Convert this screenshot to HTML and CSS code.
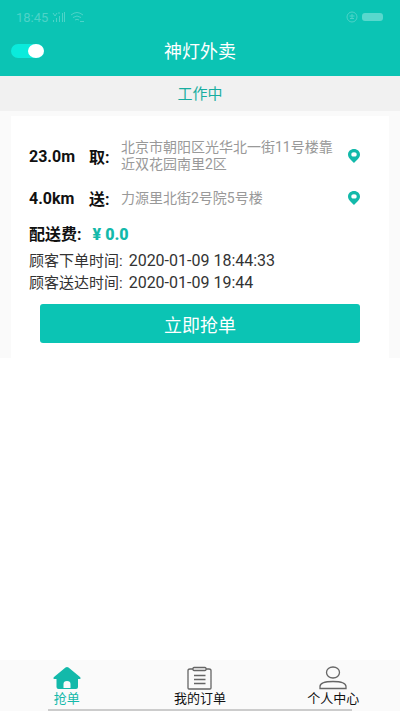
FILE: index.html
```html
<!DOCTYPE html>
<html lang="zh-CN">
<head>
<meta charset="utf-8">
<meta name="viewport" content="width=device-width, initial-scale=1">
<title>神灯外卖</title>
<link rel="stylesheet" href="styles.css">
</head>
<body>
<header class="header">
  <div class="system">
    <span>18:45</span>
    <svg width="14" height="12" viewBox="0 0 14 12" fill="none" stroke="currentColor"><path d="M1.500 11V9M4.500 11V7M7.500 11V5M10.500 11V2M12.500 11V1M1 2l2 3 2-3M6 2h2"/></svg>
    <svg width="15" height="12" viewBox="0 0 15 12" fill="none" stroke="currentColor"><path d="M1 4q6-5 12 0M3 6.500q4-3 8 0M5 9q2-1.500 4 0M10 10.500h4"/></svg>
    <svg class="system-end" width="12" height="12" viewBox="0 0 12 12" fill="none" stroke="currentColor"><circle cx="6" cy="6" r="5"/><path d="M3.500 5h5M4 7.500h4M6 3v5"/></svg>
    <span class="battery"></span>
  </div>
  <div class="titlebar">
    <input class="switch" type="checkbox" role="switch" aria-label="工作中" checked>
    <h1>神灯外卖</h1>
  </div>
</header>
<p class="state">工作中</p>
<main class="orders">
  <article class="card">
    <div class="stop">
      <span class="distance">23.0m</span>
      <span class="kind">取:</span>
      <span class="address">北京市朝阳区光华北一街11号楼靠近双花园南里2区</span>
      <svg class="pin" viewBox="0 0 12 14"><path fill="currentColor" fill-rule="evenodd" d="M6 0C2.600 0 0 2.400 0 5.600 0 9 3.500 11.500 6 14c2.500-2.500 6-5 6-8.400C12 2.400 9.400 0 6 0ZM6 3.200a2.700 2.200 0 1 1 0 4.400 2.700 2.200 0 0 1 0-4.400Z"/></svg>
    </div>
    <div class="stop">
      <span class="distance">4.0km</span>
      <span class="kind">送:</span>
      <span class="address">力源里北街2号院5号楼</span>
      <svg class="pin" viewBox="0 0 12 14"><path fill="currentColor" fill-rule="evenodd" d="M6 0C2.600 0 0 2.400 0 5.600 0 9 3.500 11.500 6 14c2.500-2.500 6-5 6-8.400C12 2.400 9.400 0 6 0ZM6 3.200a2.700 2.200 0 1 1 0 4.400 2.700 2.200 0 0 1 0-4.400Z"/></svg>
    </div>
    <p class="fee"><span>配送费:</span><strong>¥ 0.0</strong></p>
    <p class="time"><span>顾客下单时间:</span><time>2020-01-09 18:44:33</time></p>
    <p class="time"><span>顾客送达时间:</span><time>2020-01-09 19:44</time></p>
    <button class="grab" type="button">立即抢单</button>
  </article>
</main>
<nav class="tabs">
  <a class="tab active" href="#grab">
    <svg width="28" height="24" viewBox="0 0 28 24"><path fill="currentColor" fill-rule="evenodd" d="M12.500 1.500q1.500-1 3 0l11.500 9.500q1.500 2-.5 2H25v8q0 2-2 2H5.500q-2 0-2-2v-8h-2q-2 0-.5-2ZM10.500 22h7v-4q0-3-3.500-3t-3.500 3Z"/></svg>
    <span>抢单</span>
  </a>
  <a class="tab" href="#orders">
    <svg width="28" height="24" viewBox="0 0 28 24" fill="none" stroke="#666" stroke-width="1.300"><path d="M7 3H4q-2 0-2 1.500V22q0 1 1 1h21q1 0 1-1V4.500Q25 3 23 3h-3M8 9.500h11.500M8 13.500h11.500M8 17.500h11.500"/><rect x="7" y="1.500" width="13" height="3" rx="1"/></svg>
    <span>我的订单</span>
  </a>
  <a class="tab" href="#me">
    <svg width="28" height="24" viewBox="0 0 28 24" fill="none" stroke="#666" stroke-width="1.300"><ellipse cx="14" cy="6.500" rx="6.500" ry="5.500"/><path d="M1 22.500v-2q0-5 13-5t13 5v2Z"/></svg>
    <span>个人中心</span>
  </a>
  <span class="gesture"></span>
</nav>
</body>
</html>
```
FILE: styles.css
```css
* { box-sizing: border-box; }
body {
  margin: 0;
  min-height: 100vh;
  display: flex;
  flex-direction: column;
  background: #fff;
  color: #111;
  font-family: Roboto, "Noto Sans CJK SC", sans-serif;
}
h1, p { margin: 0; }
.header { background: #0bc4b4; }
.system {
  display: flex;
  align-items: center;
  gap: 4px;
  height: 34px;
  padding: 0 17px 0 16px;
  color: #4dd3c8;
  font-size: 13px;
}
.system-end { margin-left: auto; }
.battery {
  width: 21px;
  height: 8px;
  border-radius: 3px;
  background: #58d8cd;
}
.titlebar {
  display: grid;
  grid-template-columns: 1fr auto 1fr;
  align-items: center;
  height: 42px;
  padding: 0 11px 10px;
}
h1 {
  padding-top: 2px;
  color: #fff;
  font-size: 18px;
  font-weight: 400;
  line-height: 32px;
}
.switch {
  appearance: none;
  display: flex;
  justify-content: flex-end;
  width: 33px;
  height: 14px;
  margin: 0;
  border-radius: 7px;
  background: #0aebdc;
}
.switch::before {
  content: "";
  width: 16px;
  border-radius: 50%;
  background: #fff;
}
.switch:not(:checked) { justify-content: flex-start; }
.state {
  padding-top: 1px;
  background: #f1f1f1;
  color: #18ada0;
  font-size: 15px;
  line-height: 34px;
  text-align: center;
}
.orders {
  padding: 5px 11px 0;
  background: #fafafa;
}
.card {
  padding: 21px 18px 15px;
  background: #fff;
}
.stop {
  display: grid;
  grid-template-columns: 52px 24px 1fr 12px;
  column-gap: 8px;
  align-items: center;
  min-height: 38px;
  padding-right: 11px;
}
.stop + .stop { margin-top: 4px; }
.distance, .kind, .fee {
  font-size: 16px;
  font-weight: 700;
  white-space: nowrap;
}
.address {
  color: #999;
  font-size: 14px;
  line-height: 17px;
}
.pin {
  width: 12px;
  height: 14px;
  color: #13b9aa;
}
.fee {
  display: flex;
  align-items: center;
  gap: 11px;
  margin-top: 2px;
  line-height: 31px;
}
.fee strong {
  color: #13b9aa;
  font-size: 16px;
}
.time {
  display: flex;
  align-items: center;
  gap: 6px;
  color: #333;
  font-size: 15px;
  line-height: 22px;
}
.time time { font-size: 16px; }
.grab {
  display: block;
  width: calc(100% - 22px);
  height: 39px;
  margin: 10px auto 0;
  padding: 0;
  border: 0;
  border-radius: 3px;
  background: #0bc4b4;
  color: #fff;
  font: inherit;
  font-size: 18px;
}
.tabs {
  position: relative;
  display: grid;
  grid-template-columns: repeat(3, 1fr);
  height: 51px;
  margin-top: auto;
  background: #fafafa;
}
.tab {
  display: flex;
  flex-direction: column;
  align-items: center;
  padding-top: 6px;
  color: #111;
  font-size: 13px;
  line-height: 18px;
  text-decoration: none;
}
.tab.active { color: #13b9aa; }
.tab svg { display: block; }
.gesture {
  position: absolute;
  right: 12%;
  bottom: 0;
  left: 12%;
  height: 2px;
  background: #ccc;
}
```
